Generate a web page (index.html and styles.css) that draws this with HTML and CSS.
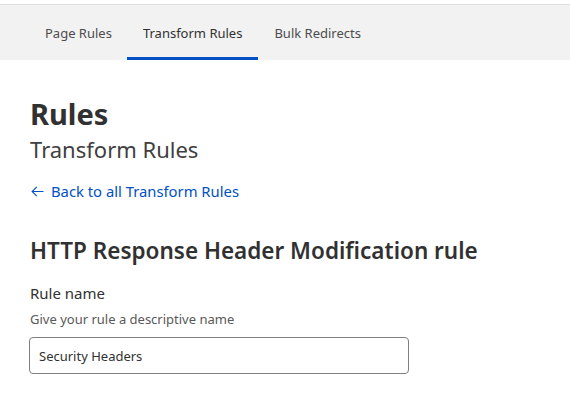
FILE: index.html
```html
<!DOCTYPE html>
<html>
<head>
<meta charset="utf-8">
<link rel="stylesheet" href="styles.css">
</head>
<body>
<div class="topgap"></div>
<nav class="tabs">
  <a class="tab">Page Rules</a>
  <a class="tab active">Transform Rules</a>
  <a class="tab">Bulk Redirects</a>
</nav>
<main class="content">
  <h1 class="title">Rules</h1>
  <div class="subtitle">Transform Rules</div>
  <a class="back"><svg class="arrow" width="13" height="11" viewBox="0 0 13 11"><path d="M12.5 5.5H1.2M5.8 0.8L1.1 5.5L5.8 10.2" fill="none" stroke="#0051c3" stroke-width="1.1"/></svg><span>Back to all Transform Rules</span></a>
  <h2 class="section">HTTP Response Header Modification rule</h2>
  <label class="label">Rule name</label>
  <div class="help">Give your rule a descriptive name</div>
  <div class="input">Security Headers</div>
</main>
</body>
</html>
```
FILE: styles.css
```css
html, body { margin: 0; padding: 0; background: #fff; }
body { font-family: "Noto Sans", "Open Sans", sans-serif; color: #313131; }
.topgap { height: 4px; background: #fff; }
.tabs {
  display: flex;
  height: 56px;
  background: #f2f2f2;
  border-top: 1px solid #dcdcdc;
  padding-left: 29px;
  box-sizing: border-box;
}
.tab {
  display: flex;
  align-items: center;
  padding: 0 16px;
  font-size: 13px;
  color: #4d4d4d;
  border-bottom: 3px solid transparent;
  padding-top: 3px;
}
.tab:first-child { padding-left: 16px; padding-right: 15px; }
.tab.active { border-bottom-color: #0051c3; color: #313131; }
.content { padding: 36px 30px 0; }
.title { margin: 0; font-size: 29px; font-weight: 700; line-height: 36px; color: #313131; }
.subtitle { margin-top: 3px; font-size: 22px; line-height: 28px; color: #404040; }
.back { display: flex; align-items: center; margin-top: 18px; font-size: 14.8px; color: #0051c3; line-height: 20px; }
.arrow { display: block; margin: 1px 7px 0 1px; }
.section { margin: 35px 0 0; font-size: 22.5px; font-weight: 600; line-height: 30px; color: #313131; }
.label { display: block; margin-top: 17px; font-size: 15px; line-height: 20px; color: #313131; }
.help { margin-top: 7px; font-size: 13px; line-height: 18px; color: #595959; }
.input {
  margin-top: 9px;
  margin-left: -1px;
  width: 380px;
  height: 37px;
  box-sizing: border-box;
  border: 1px solid #808080;
  border-radius: 4px;
  padding: 0 9px;
  display: flex;
  align-items: center;
  font-size: 13px;
  color: #313131;
}
```
